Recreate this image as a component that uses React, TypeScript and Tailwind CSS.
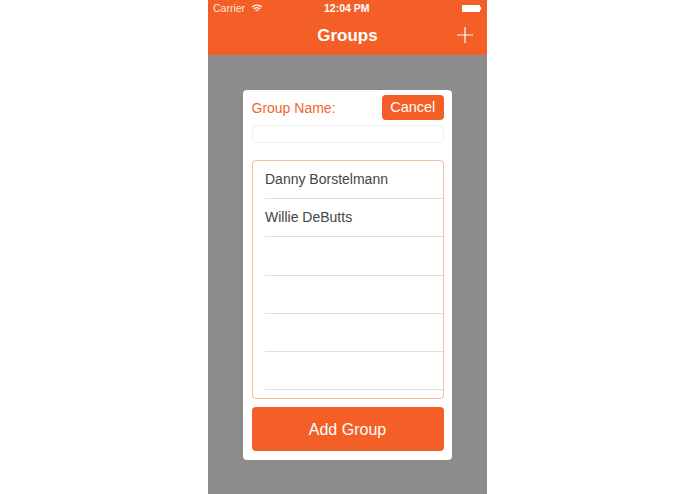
function Row({ name }: { name?: string }) {
  return (
    <div className="h-[38.2px] ml-[12.5px] border-b border-[#dfdfe2] flex items-center text-[14px] text-[#444444]">
      {name}
    </div>
  );
}

export default function App() {
  return (
    <div className="w-[695px] h-[494px] bg-white flex justify-center overflow-hidden font-['Liberation_Sans',sans-serif]">
      <div className="w-[279px] h-[494px] bg-[#8c8c8c] flex flex-col items-center">
        <div className="w-full h-[55px] shrink-0 bg-[#f45f27] text-white">
          <div className="h-[17px] px-[5px] flex items-center justify-between text-[10.5px] relative">
            <div className="flex items-center gap-[6px] text-[#fde6da]">
              <span>Carrier</span>
              <svg width="12" height="9" viewBox="0 0 12 9" fill="none" stroke="white" strokeWidth="1.2">
                <path d="M1 3.2a7 7 0 0 1 10 0" />
                <path d="M2.8 5a4.4 4.4 0 0 1 6.4 0" />
                <path d="M4.5 6.7a2 2 0 0 1 3 0" />
              </svg>
            </div>
            <span className="absolute left-[116px] font-bold">12:04 PM</span>
            <div className="flex items-center mr-[1px]">
              <div className="w-[18px] h-[7px] bg-white rounded-[1px]" />
              <div className="w-[1px] h-[3px] bg-white" />
            </div>
          </div>
          <div className="h-[37px] relative flex items-center justify-center">
            <span className="text-[17px] font-bold">Groups</span>
            <svg className="absolute right-[14px] top-[10px]" width="16" height="16" viewBox="0 0 16 16" stroke="white" strokeWidth="1.2">
              <path d="M8 0v16M0 8h16" />
            </svg>
          </div>
        </div>
        <div className="mt-[35px] w-[209px] h-[370px] bg-white rounded-[4px] px-[8.5px] pt-[5px] flex flex-col">
          <div className="flex items-center justify-between h-[25px]">
            <span className="text-[14px] text-[#f0682f] pt-[2px]">Group Name:</span>
            <button className="w-[61.5px] h-[25px] bg-[#f45f27] rounded-[4px] text-white text-[14.5px]">Cancel</button>
          </div>
          <div className="mt-[5px] h-[18px] rounded-[6px] border border-[#eeeef0] bg-white" />
          <div className="mt-[17px] h-[239px] rounded-[4px] border border-[#fbb9a0] overflow-hidden">
            <Row name="Danny Borstelmann" />
            <Row name="Willie DeButts" />
            <Row />
            <Row />
            <Row />
            <Row />
          </div>
          <button className="mt-[8px] h-[44px] bg-[#f45f27] rounded-[4px] text-white text-[16px] pt-[2px]">Add Group</button>
        </div>
      </div>
    </div>
  );
}
